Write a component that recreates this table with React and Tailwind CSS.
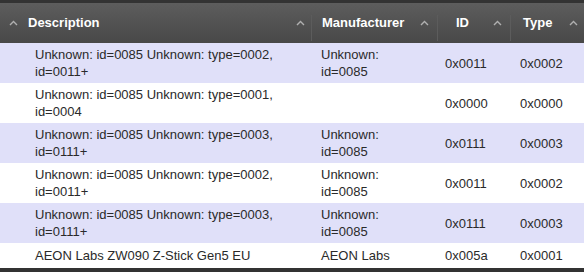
import React from "react";

const Chev = () => (
  <svg width="9" height="6" viewBox="0 0 9 6" className="shrink-0">
    <path d="M1 5 L4.5 1.5 L8 5" fill="none" stroke="#b0b0b0" strokeWidth="1.4" />
  </svg>
);

const Sep = () => <div className="w-px h-[26px] bg-[#5c5c5c] self-end mb-[2px] shrink-0" />;

const rows = [
  ["Unknown: id=0085 Unknown: type=0002,\nid=0011+", "Unknown:\nid=0085", "0x0011", "0x0002"],
  ["Unknown: id=0085 Unknown: type=0001,\nid=0004", "", "0x0000", "0x0000"],
  ["Unknown: id=0085 Unknown: type=0003,\nid=0111+", "Unknown:\nid=0085", "0x0111", "0x0003"],
  ["Unknown: id=0085 Unknown: type=0002,\nid=0011+", "Unknown:\nid=0085", "0x0011", "0x0002"],
  ["Unknown: id=0085 Unknown: type=0003,\nid=0111+", "Unknown:\nid=0085", "0x0111", "0x0003"],
  ["AEON Labs ZW090 Z-Stick Gen5 EU", "AEON Labs", "0x005a", "0x0001"],
];

export default function App() {
  return (
    <div
      className="w-[584px] h-[272px] overflow-hidden bg-white flex flex-col"
      style={{ fontFamily: '"Liberation Sans", Arial, sans-serif' }}
    >
      <div className="h-[3px] bg-[#333333]" />
      <div className="h-[40px] bg-gradient-to-b from-[#5d5d5d] to-[#484848] grid grid-cols-[311px_126px_73px_74px] text-white font-bold text-[13px] items-center">
        <div className="flex items-center h-full pl-[9px] pr-[6px]">
          <Chev />
          <span className="ml-[10px]">Description</span>
          <span className="ml-auto"><Chev /></span>
        </div>
        <div className="flex items-center h-full pr-[8px]">
          <Sep />
          <span className="ml-[10px]">Manufacturer</span>
          <span className="ml-auto"><Chev /></span>
        </div>
        <div className="flex items-center h-full pr-[8px]">
          <Sep />
          <span className="ml-[18px]">ID</span>
          <span className="ml-auto"><Chev /></span>
        </div>
        <div className="flex items-center h-full pr-[6px]">
          <Sep />
          <span className="ml-[12px]">Type</span>
          <span className="ml-auto"><Chev /></span>
        </div>
      </div>
      {rows.map((r, i) => (
        <div
          key={i}
          className={`grid grid-cols-[311px_126px_73px_74px] items-center text-[13px] leading-[17px] text-[#2a2a2a] ${
            i === 5 ? "h-[25px]" : "h-[40px]"
          } ${i % 2 === 0 ? "bg-[#e0e0f9]" : "bg-white"}`}
        >
          <div className="pl-[35px] whitespace-pre-line">{r[0]}</div>
          <div className="pl-[10px] whitespace-pre-line">{r[1]}</div>
          <div className="pl-[8px]">{r[2]}</div>
          <div className="pl-[10px]">{r[3]}</div>
        </div>
      ))}
      <div className="flex-1 bg-[#333333]" />
    </div>
  );
}
